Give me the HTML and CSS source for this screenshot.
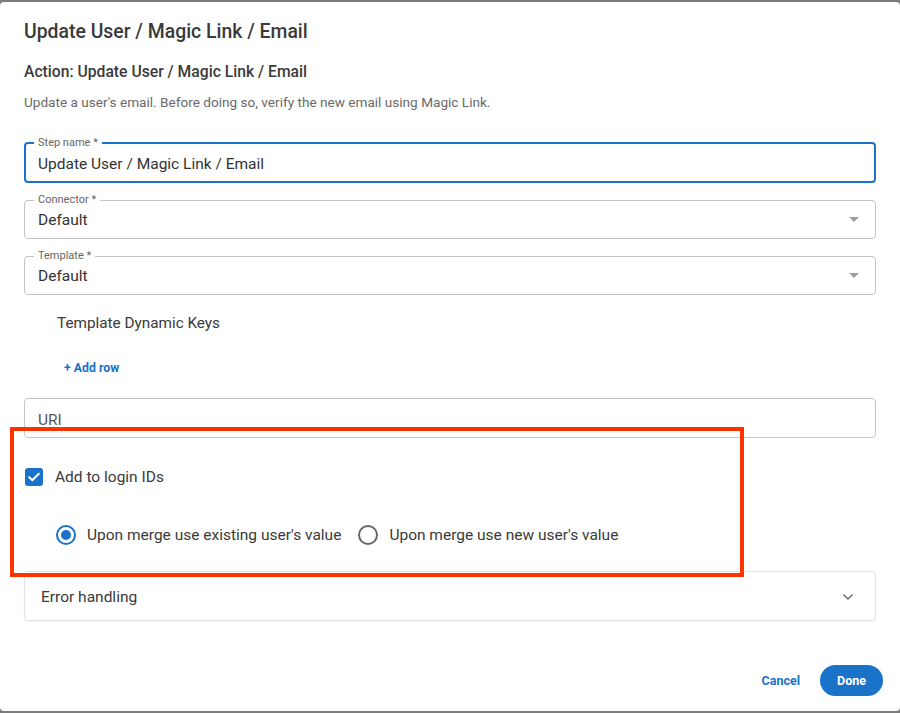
FILE: index.html
```html
<!DOCTYPE html>
<html lang="en">
<head>
<meta charset="utf-8">
<title>Update User / Magic Link / Email</title>
<link rel="stylesheet" href="styles.css">
</head>
<body>
<div class="dialog">
  <h1 class="title">Update User / Magic Link / Email</h1>
  <h2 class="action">Action: Update User / Magic Link / Email</h2>
  <p class="desc">Update a user's email. Before doing so, verify the new email using Magic Link.</p>

  <fieldset class="field focused">
    <legend>Step name *</legend>
    <div class="value">Update User / Magic Link / Email</div>
  </fieldset>

  <fieldset class="field select">
    <legend>Connector *</legend>
    <div class="value">Default</div>
    <span class="caret"></span>
  </fieldset>

  <fieldset class="field select">
    <legend>Template *</legend>
    <div class="value">Default</div>
    <span class="caret"></span>
  </fieldset>

  <div class="keys-title">Template Dynamic Keys</div>
  <a class="add-row">+ Add row</a>

  <div class="field plain"><span class="placeholder">URI</span></div>

  <label class="check-row">
    <span class="checkbox">
      <svg viewBox="0 0 18 18" width="18" height="18"><path d="M4.2 9.3l3.1 3 6.5-6.6" fill="none" stroke="#fff" stroke-width="2" stroke-linecap="round" stroke-linejoin="round"/></svg>
    </span>
    <span>Add to login IDs</span>
  </label>

  <div class="radio-row">
    <label class="radio-opt"><span class="radio on"></span><span>Upon merge use existing user's value</span></label>
    <label class="radio-opt"><span class="radio"></span><span>Upon merge use new user's value</span></label>
  </div>

  <div class="accordion">
    <span>Error handling</span>
    <svg class="chev" viewBox="0 0 12 8" width="12" height="8"><path d="M1.5 1.5l4.5 4.5 4.5-4.5" fill="none" stroke="#666" stroke-width="1.4"/></svg>
  </div>

  <div class="actions">
    <button class="btn-text">Cancel</button>
    <button class="btn-primary">Done</button>
  </div>

  <div class="highlight"></div>
</div>
</body>
</html>
```

FILE: styles.css
```css
* { box-sizing: border-box; }

html, body {
  margin: 0;
  height: 713px;
  overflow: hidden;
}

body {
  background: #7c7c7c;
  padding-top: 2px;
  font-family: Roboto, "Liberation Sans", sans-serif;
  color: #333;
}

.dialog {
  position: relative;
  background: #fff;
  height: 709px;
  width: 900px;
  border-radius: 4px;
  padding: 0 24px;
  display: flex;
  flex-direction: column;
}

.title {
  margin: 18px 0 0;
  font-size: 19.4px;
  line-height: 24px;
  font-weight: 500;
  color: #3a3a3a;
}

.action {
  margin: 18px 0 0;
  font-size: 15.7px;
  line-height: 20px;
  font-weight: 500;
  color: #3a3a3a;
}

.desc {
  margin: 11px 0 0;
  font-size: 13.6px;
  line-height: 18px;
  color: #6a6a6a;
}

.field {
  margin: 11px 0 0;
  padding: 0;
  border: 1px solid #c4c4c4;
  border-radius: 4px;
  min-width: 0;
  display: flex;
  align-items: center;
}

.field legend {
  font-size: 11px;
  line-height: 12px;
  color: #666;
  padding: 0 4px;
  margin-left: 9px;
}

.field .value {
  flex: 1;
  font-size: 15.5px;
  line-height: 20px;
  color: #333;
  padding: 4px 0 8px 13px;
}

.field.focused {
  margin-top: 26px;
  border: 2px solid #1b72c9;
}

.field.focused legend { margin-left: 8px; }

.field.focused .value {
  padding: 5px 0 7px 12px;
}

.caret {
  width: 0;
  height: 0;
  border-left: 5px solid transparent;
  border-right: 5px solid transparent;
  border-top: 5px solid #9e9e9e;
  margin: 0 16px 0 0;
  position: relative;
  top: -3px;
}

.keys-title {
  margin-top: 18px;
  padding-left: 33px;
  font-size: 15.3px;
  line-height: 20px;
  color: #3a3a3a;
}

.add-row {
  margin-top: 27px;
  padding-left: 40px;
  font-size: 12.3px;
  line-height: 16px;
  font-weight: 700;
  color: #1b72c9;
}

.field.plain {
  margin-top: 22px;
  height: 40px;
  padding: 4px 0 0 13px;
}

.placeholder {
  font-size: 15.5px;
  line-height: 20px;
  color: #555;
}

.check-row {
  margin-top: 27px;
  display: flex;
  align-items: center;
  gap: 12px;
  height: 24px;
  font-size: 15.5px;
  color: #3a3a3a;
}

.checkbox {
  width: 18px;
  height: 18px;
  margin-left: 1px;
  border-radius: 3px;
  background: #1b72c9;
  display: flex;
}

.radio-row {
  margin-top: 34px;
  display: flex;
  align-items: center;
  height: 24px;
  padding-left: 32px;
  gap: 17px;
  font-size: 15.5px;
  color: #3a3a3a;
}

.radio-opt {
  display: flex;
  align-items: center;
  gap: 11px;
}

.radio {
  width: 20px;
  height: 20px;
  border-radius: 50%;
  border: 2px solid #666;
  display: flex;
  align-items: center;
  justify-content: center;
}

.radio.on { border-color: #1b72c9; }

.radio.on::after {
  content: "";
  width: 10px;
  height: 10px;
  border-radius: 50%;
  background: #1b72c9;
}

.accordion {
  margin-top: 24px;
  height: 50px;
  border: 1px solid #e2e2e2;
  border-radius: 4px;
  box-shadow: 0 1px 2px rgba(0,0,0,0.06);
  display: flex;
  align-items: center;
  justify-content: space-between;
  padding: 2px 21px 0 16px;
  font-size: 15.5px;
  color: #3a3a3a;
}

.actions {
  margin-top: 44px;
  margin-right: -7px;
  display: flex;
  justify-content: flex-end;
  align-items: center;
  gap: 20px;
}

.actions button {
  font-family: inherit;
  font-size: 12.5px;
  font-weight: 700;
  border: none;
  cursor: pointer;
}

.btn-text {
  background: none;
  color: #1b72c9;
  padding: 0;
}

.btn-primary {
  background: #1b72c9;
  color: #fff;
  width: 63px;
  height: 31px;
  border-radius: 16px;
  padding: 0;
}

.highlight {
  position: absolute;
  left: 10px;
  top: 425px;
  width: 734px;
  height: 150px;
  border: 4px solid #fe3300;
  pointer-events: none;
}
```
